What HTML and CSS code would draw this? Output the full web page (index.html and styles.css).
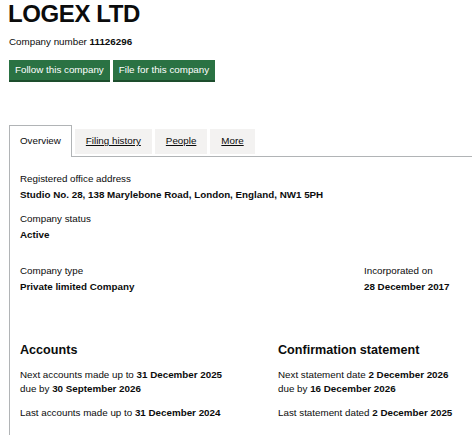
FILE: index.html
```html
<!DOCTYPE html>
<html lang="en">
<head>
<meta charset="utf-8">
<title>LOGEX LTD</title>
<link rel="stylesheet" href="styles.css">
</head>
<body>
<div class="page">
  <h1 class="title">LOGEX LTD</h1>
  <p class="company-number">Company number <strong>11126296</strong></p>
  <div class="actions">
    <a class="button" href="#">Follow this company</a>
    <a class="button" href="#">File for this company</a>
  </div>

  <div class="tabs">
    <ul class="tab-list">
      <li class="tab selected"><a href="#">Overview</a></li>
      <li class="tab"><a href="#">Filing history</a></li>
      <li class="tab"><a href="#">People</a></li>
      <li class="tab"><a href="#">More</a></li>
    </ul>
    <div class="panel">
      <dl class="field">
        <dt>Registered office address</dt>
        <dd>Studio No. 28, 138 Marylebone Road, London, England, NW1 5PH</dd>
      </dl>
      <dl class="field">
        <dt>Company status</dt>
        <dd>Active</dd>
      </dl>
      <div class="row row-type">
        <dl class="field">
          <dt>Company type</dt>
          <dd>Private limited Company</dd>
        </dl>
        <dl class="field">
          <dt>Incorporated on</dt>
          <dd>28 December 2017</dd>
        </dl>
      </div>
      <div class="row row-filings">
        <section class="block">
          <h2>Accounts</h2>
          <p>Next accounts made up to <strong>31 December 2025</strong><br>due by <strong>30 September 2026</strong></p>
          <p>Last accounts made up to <strong>31 December 2024</strong></p>
        </section>
        <section class="block">
          <h2>Confirmation statement</h2>
          <p>Next statement date <strong>2 December 2026</strong><br>due by <strong>16 December 2026</strong></p>
          <p>Last statement dated <strong>2 December 2025</strong></p>
        </section>
      </div>
    </div>
  </div>
</div>
</body>
</html>
```

FILE: styles.css
```css
html, body {
  margin: 0;
  padding: 0;
  overflow: hidden;
  background: #ffffff;
}
body {
  font-family: "Liberation Sans", Arial, sans-serif;
  color: #0b0c0c;
  font-size: 9.8px;
  line-height: 1.35;
}
.page {
  padding: 0 0 0 9px;
}
.title {
  margin: 0;
  padding-top: 1px;
  font-size: 24px;
  line-height: 26px;
  font-weight: 700;
  letter-spacing: -0.4px;
  margin-left: -1px;
}
.company-number {
  margin: 8px 0 0;
  font-size: 9.8px;
  line-height: 13px;
}
.actions {
  display: flex;
  gap: 3px;
  margin-top: 12px;
}
.button {
  display: block;
  background: #2a7243;
  color: #ffffff;
  text-decoration: none;
  font-size: 9.8px;
  line-height: 12px;
  padding: 4px 6px 4px;
  box-shadow: 0 2px 0 #1d4d2d;
}
.tabs {
  margin-top: 45px;
}
.tab-list {
  list-style: none;
  margin: 0;
  padding: 0;
  display: flex;
  gap: 3px;
  border-bottom: 1px solid #b1b4b6;
}
.tab {
  background: #f3f2f1;
  margin-top: 4px;
  margin-bottom: 2px;
}
.tab a {
  display: block;
  color: #0b0c0c;
  font-size: 9.8px;
  line-height: 12px;
  padding: 6px 11px 6px;
  text-decoration: underline;
  text-underline-offset: 1px;
}
.tab.selected {
  background: #ffffff;
  margin-top: 0;
  margin-bottom: -1px;
  border: 1px solid #b1b4b6;
  border-bottom: 0;
}
.tab.selected a {
  text-decoration: none;
  padding: 9px 10px 10px;
}
.panel {
  border-left: 1px solid #b1b4b6;
  padding: 15px 0 10px 10px;
}
.field {
  margin: 0 0 11px;
}
.field dt {
  font-size: 9.8px;
  line-height: 13px;
}
.field dd {
  margin: 3px 0 0;
  font-weight: 700;
  font-size: 9.8px;
  line-height: 13px;
}
.row {
  display: grid;
}
.row-type {
  grid-template-columns: 344px auto;
  margin-top: 23px;
}
.row-filings {
  grid-template-columns: 258px auto;
  margin-top: 38px;
}
.block h2 {
  margin: 0 0 9px;
  font-size: 12.6px;
  line-height: 17px;
  font-weight: 700;
}
.block p {
  margin: 0 0 10px;
  font-size: 9.8px;
  line-height: 14px;
}
```
